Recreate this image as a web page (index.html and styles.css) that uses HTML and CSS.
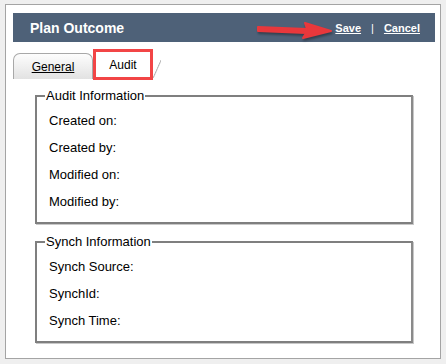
FILE: index.html
```html
<!DOCTYPE html>
<html lang="en">
<head>
  <meta charset="UTF-8">
  <title>Plan Outcome</title>
  <link rel="stylesheet" href="styles.css">
</head>
<body>
  <div class="dialog">
    <!-- Header -->
    <div class="header">
      <span class="title">Plan Outcome</span>
      <div class="actions">
        <svg class="arrow" width="80" height="20" viewBox="0 0 80 20">
          <path d="M3 8 L52 10 L50 4 L76 12 L48 19 L51 14 L3 12 Z" fill="#e8383c" stroke="#e8383c" stroke-width="2" stroke-linejoin="round"/>
        </svg>
        <a href="#">Save</a>
        <span class="sep">|</span>
        <a href="#">Cancel</a>
      </div>
    </div>

    <!-- Tabs -->
    <div class="tabs">
      <div class="tab">General</div>
      <div class="tab active">Audit</div>
      <div class="tab-edge"></div>
    </div>

    <!-- Content -->
    <div class="content">
      <fieldset>
        <legend>Audit Information</legend>
        <div class="row">Created on:</div>
        <div class="row">Created by:</div>
        <div class="row">Modified on:</div>
        <div class="row">Modified by:</div>
      </fieldset>
      <fieldset>
        <legend>Synch Information</legend>
        <div class="row">Synch Source:</div>
        <div class="row">SynchId:</div>
        <div class="row">Synch Time:</div>
      </fieldset>
    </div>
  </div>
</body>
</html>
```

FILE: styles.css
```css
* {
  margin: 0;
  padding: 0;
  box-sizing: border-box;
}
body {
  font-family: Arial, "Liberation Sans", sans-serif;
  background: #efefef;
  padding: 4px 5px 5px 5px;
  color: #000;
}
.dialog {
  background: #fff;
  border: 1px solid #a4a4a4;
  height: 355px;
  padding: 8px 5px 0 7px;
}
.header {
  background: #4e6178;
  height: 29px;
  display: flex;
  align-items: center;
  justify-content: space-between;
  padding: 0 15px 0 17px;
}
.title {
  color: #fff;
  font-weight: bold;
  font-size: 14px;
}
.actions {
  display: flex;
  align-items: center;
  color: #fff;
  font-size: 11px;
  font-weight: bold;
  position: relative;
}
.actions a {
  color: #fff;
}
.sep {
  margin: 0 10px;
  font-weight: normal;
}
.arrow {
  position: absolute;
  left: -80px;
  top: -3px;
  filter: drop-shadow(1px 2px 1px rgba(0, 0, 0, 0.35));
}
.tabs {
  display: flex;
  align-items: flex-end;
  height: 38px;
  padding-top: 8px;
}
.tab {
  width: 80px;
  height: 26px;
  border: 1px solid #a8a8a8;
  border-bottom: none;
  border-radius: 7px 7px 0 0;
  background: linear-gradient(to bottom, #fdfdfd, #e2e2e2);
  font-size: 12px;
  text-decoration: underline;
  display: flex;
  align-items: center;
  justify-content: center;
  margin-bottom: 1px;
}
.tab.active {
  width: 60px;
  height: 31px;
  background: #fff;
  border: 3px solid #f24546;
  border-radius: 0;
  text-decoration: none;
  margin-bottom: 0;
}
.tab-edge {
  width: 8px;
  height: 18px;
  margin-bottom: 2px;
  background: linear-gradient(to bottom right, transparent 45%, #b0b0b0 50%, transparent 58%);
}
.content {
  padding: 3px 22px 0 22px;
  display: flex;
  flex-direction: column;
  gap: 5px;
}
fieldset {
  border: 2px solid #7f7f7f;
  border-right-color: #8a8a8a;
  box-shadow: 1px 1px 0 #c8c8c8;
  padding: 4px 12px 7px 12px;
  margin-top: 6px;
}
legend {
  font-size: 13px;
  padding: 0 1px;
  margin-left: -4px;
  line-height: 14px;
}
.row {
  font-size: 13px;
  line-height: 27px;
}
```
